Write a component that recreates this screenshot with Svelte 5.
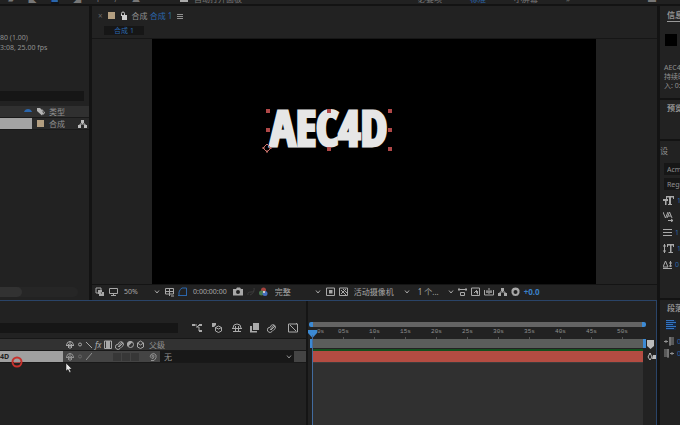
<script lang="ts">
  type Icon = { w: number; line?: string; fill?: string };

  const icons: Record<string, Icon> = {
    menu: { w: 6, line: 'M0 3.5H6M0 5.5H6M0 7.5H6' },
    lock: { w: 7, line: 'M1.5 5V2.5Q1.5 1 3 1T4.500 2.500V4', fill: 'M2 4H7V9H2Z' },
    up: { w: 8, fill: 'M0 6Q1 3 4 3T8 6Z' },
    tag: { w: 9, fill: 'M1 1H4L8 5L6 8.500L1 4ZM6 2L9 5.500L7.500 8Z' },
    tree: { w: 9, line: 'M4.500 3V5M2 7V5H7V7', fill: 'M3 1H6V4H3ZM0 6H3V9H0ZM6 6H9V9H6Z' },
    chevron: { w: 6, line: 'M1 3.500L3 6L5 3.500' },
    layers: { w: 10, line: 'M1 1H6V6H1Z', fill: 'M3 3H7V7H3ZM5 5H9V9H4V7H7Z' },
    monitor: { w: 9, line: 'M.5 1.500H8.500V6.500H.5ZM2 8.500H7M4.500 6.500V8' },
    grid: { w: 9, line: 'M.5 1.500H8.500V7H.5ZM4.500 1V9M0 4.500H9M6 9H9' },
    mask: { w: 9, line: 'M1 8.500H8.500V1H4Q2 2 1 5ZM0 8.500H9' },
    camera: { w: 10, fill: 'M0 2H3L4 .5H7L8 2H10V8.500H0ZM5 3A2 2 0 1 0 5 7A2 2 0 1 0 5 3Z' },
    ghost: { w: 8, line: 'M1 8Q0 5 4 5T7 1M3 8Q6 7 7 4' },
    region: { w: 9, line: 'M.5 1H8.500V8.500H.5Z', fill: 'M3 3H6.500V6.500H3Z' },
    checker: { w: 9, line: 'M.5 1H8.500V8.500H.5ZM2 3L7 8M2 7L7 2M4 2L8 6' },
    ruler: { w: 9, line: 'M0 2.500H9M1 1V4M8 1V4M2.500 5.500H6.500V8.500H2.500Z' },
    snap: { w: 9, line: 'M.5 1H8.500V8.500H.5ZM3 6L6 3', fill: 'M4 4H7V8Z' },
    chart: { w: 10, line: 'M.5 3V8H9.500V3M2 5H8M5 1V7M3 3V6M7 3V6' },
    shutter: { w: 9, fill: 'M4.500 .5L7 1L8.500 3V6L7 8.500L4.500 9L2 8.500L.5 6V3L2 1ZM4.500 3A2 2 0 1 0 4.500 7A2 2 0 1 0 4.500 3Z' },
    flow: { w: 10, line: 'M0 2H5M4 4H7V8H9M5 4L7 2H9', fill: 'M0 1H3V3H0ZM7 1H10V3H7ZM7 7H10V9H7Z' },
    draft: { w: 10, line: 'M3.500 4.500L6.500 3L9.500 4.500V8L6.500 9.500L3.500 8ZM3.500 4.500L6.500 6L9.500 4.500M1 1L3 3', fill: 'M0 0H4V2L2 4H0Z' },
    shy: { w: 10, line: 'M1 5Q1 1 5 1T9 5M0 5.500H10M3.500 3V9M6.500 3V9M1 8.500H9' },
    frames: { w: 9, fill: 'M3 0H9V7H3ZM0 3H2V8H7V9.500H0Z' },
    blur: { w: 9, line: 'M3.500 4A2.500 2.500 0 1 1 7 6.500L5 8.500A2.500 2.500 0 1 1 1 5ZM3 7L7 2M4 7L8 3' },
    graph: { w: 10, line: 'M.5 1H9.500V9H.5ZM2 2L8 8M8 1L9 0' },
    person: { w: 8, line: 'M0.500 5Q1 1.500 4 1.500T7.500 5M4 1V9M2.500 4V8M5.500 4V8M0 5.500H8' },
    sun: { w: 6, line: 'M3 3A1.500 1.500 0 1 0 3 6A1.500 1.500 0 1 0 3 3' },
    slash: { w: 6, line: 'M0 2L6 8' },
    edge: { w: 6, line: 'M0 8L6 1' },
    film: { w: 8, line: 'M.5 1H7.500V8.500H.5Z', fill: 'M2 1H6V8H2Z' },
    half: { w: 7, line: 'M3.500 1.500A3 3 0 1 0 3.500 7.500A3 3 0 1 0 3.500 1.500', fill: 'M1 6.500A3 3 0 0 1 5.500 2Z' },
    cube: { w: 7, line: 'M3.500 1L6.500 3V7L3.500 8.500L.5 7V3ZM.5 3L3.500 5L6.500 3' },
    swirl: { w: 8, line: 'M4 5A1 1 0 1 1 5 4Q5 7 3 6.500Q0 5 2 2.500Q5 0 7 3Q8 6 5 8.500H2' },
    marker: { w: 7, fill: 'M0 0H7V6L3.500 9L0 6Z' },
    comp: { w: 9, line: 'M3 1L1 5L3 8L5 5ZM3 1V2', fill: 'M6 3H9V7H5Z' },
    size: { w: 11, fill: 'M0 3H5V5H3.500V9H2V5H0ZM3 0H11V3H10V1.500H8V8H9V9H5V8H6V1.500H4V3H3Z' },
    kern: { w: 11, line: 'M0 0L2.500 6L5 0M4 6L6.500 0L9 6M5 4H8M5 8.500H10M8 7L10 8.500L8 10' },
    lines: { w: 9, line: 'M0 1.500H9M0 4.500H9M0 7.500H9' },
    height: { w: 11, line: 'M1.500 0V9M0 2H3M0 7H3', fill: 'M4 0H11V3H10V1.500H8.500V8H10V9H5.500V8H7V1.500H5V3H4Z' },
    base: { w: 9, line: 'M0 7L2.500 1L5 7ZM0 8.500H9M7.500 1V7M6 3H9M6 6H9' },
    align: { w: 10, line: 'M0 0.500H8M0 2.500H10M0 4.500H7M0 6.500H10M0 8.500H8' },
    indent: { w: 10, line: 'M0 4.500H4M2 3V6M5 1H10M5 3H10M5 5H10M5 7H10M6 0V9' },
    outdent: { w: 10, line: 'M6 4.500H10M8 3V6M0 1H5M0 3H5M0 5H5M0 7H5M4 0V9' }
  };

  const switches = ['person', 'sun', 'slash', 'fx', 'film', 'blur', 'half', 'cube'];
  const ticks = ['', '05s', '10s', '15s', '20s', '25s', '30s', '35s', '40s', '45s', '50s'];
  const typeRows = [
    { icon: 'size', value: '1' },
    { icon: 'kern', value: '' },
    { icon: 'lines', value: '1' },
    { icon: 'height', value: '1' },
    { icon: 'base', value: '0' }
  ];
  const handles = ['tl', 'tc', 'tr', 'ml', 'mr', 'bc', 'br'];

  let projectSearch = $state('');
  let layerSearch = $state('');
  let fontFamily = $state('Acme');
  let fontStyle = $state('Regular');
</script>

{#snippet icon(name: string)}
  <svg width={icons[name].w} height="10" viewBox="0 0 {icons[name].w} 10" aria-hidden="true">
    {#if icons[name].line}<path d={icons[name].line} fill="none" stroke="currentColor" />{/if}
    {#if icons[name].fill}<path d={icons[name].fill} fill="currentColor" fill-rule="evenodd" />{/if}
  </svg>
{/snippet}

{#snippet tool(name: string, label: string)}
  <button aria-label={label}>{@render icon(name)}</button>
{/snippet}

<div class="app">
  <header class="toolbar">
    <div class="tools"><span>▰</span><span>◣</span><span class="blue on">■</span><span>◢</span><span>T</span><span>/</span><span>▲</span></div>
    <label class="snap"><input type="checkbox" />自动打开面板</label>
    <nav>
      <a href="#default">必要项</a>
      <a class="blue" href="#standard">标准</a>
      <a href="#small">小屏幕</a>
      <a href="#library">»</a>
    </nav>
    <span class="find">▬</span>
  </header>

  <div class="body">
    <div class="workspace">
      <div class="upper">
        <section class="project">
          <div class="meta">
            <div>80 (1.00)</div>
            <div>3:08, 25.00 fps</div>
          </div>
          <input class="search" aria-label="搜索项目" bind:value={projectSearch} />
          <div class="cols head">
            <span class="first blue">{@render icon('up')}</span>
            <span class="mid">{@render icon('tag')}</span>
            <span>类型</span>
          </div>
          <div class="cols item">
            <span class="first selected"></span>
            <span class="mid"><i class="swatch"></i></span>
            <span>合成</span>
            <span class="end">{@render icon('tree')}</span>
          </div>
          <div class="scroll"><i></i></div>
        </section>

        <section class="viewer">
          <div class="title">
            <button class="close" aria-label="关闭">×</button>
            <i class="swatch"></i>
            {@render icon('lock')}
            <span class="name">合成 <span class="blue">合成 1</span></span>
            {@render tool('menu', '面板菜单')}
          </div>
          <div class="tabs"><button class="tab blue">合成 1</button></div>
          <div class="canvas">
            <div class="stage">
              <div class="text-layer">
                AEC4D
                {#each handles as h}<i class="handle {h}"></i>{/each}
                <svg class="anchor" width="10" height="10" viewBox="0 0 10 10"><path d="M5 1L9 5L5 9L1 5ZM0 5H3M7 5H10M5 7V10" fill="none" stroke="#c7716b" /></svg>
              </div>
            </div>
          </div>
          <footer class="controls">
            {@render tool('layers', '始终预览')}
            {@render tool('monitor', '主查看器')}
            <label class="drop zoom"><select aria-label="放大率"><option>50%</option></select>{@render icon('chevron')}</label>
            {@render tool('grid', '网格')}
            <span class="blue">{@render tool('mask', '蒙版')}</span>
            <button class="time">0:00:00:00</button>
            {@render tool('camera', '快照')}
            <span class="dim">{@render tool('ghost', '显示快照')}</span>
            <button aria-label="通道">
              <svg width="9" height="10" viewBox="0 0 9 10"><circle cx="4.500" cy="3" r="2.500" fill="#a6433e" /><circle cx="2.500" cy="6" r="2.500" fill="#487b50" /><circle cx="6" cy="6.500" r="2.500" fill="#456fc0" /><path d="M4 4H6V6H4Z" fill="#ccc" /></svg>
            </button>
            <label class="drop quality"><select aria-label="分辨率"><option>完整</option></select>{@render icon('chevron')}</label>
            {@render tool('region', '目标区域')}
            {@render tool('checker', '透明网格')}
            <label class="drop view"><select aria-label="视图"><option>活动摄像机</option></select>{@render icon('chevron')}</label>
            <label class="drop count"><select aria-label="视图布局"><option>1 个...</option></select>{@render icon('chevron')}</label>
            {@render tool('ruler', '像素长宽比')}
            {@render tool('snap', '快速预览')}
            {@render tool('chart', '时间轴')}
            {@render tool('tree', '流程图')}
            {@render tool('shutter', '重置曝光')}
            <span class="exposure">+0.0</span>
          </footer>
        </section>
      </div>

      <section class="timeline">
        <div class="layers">
          <div class="layer-tools">
            <input class="search" aria-label="搜索图层" bind:value={layerSearch} />
            {@render tool('flow', '合成微型流程图')}
            {@render tool('draft', '草图 3D')}
            {@render tool('shy', '隐藏图层')}
            {@render tool('frames', '帧混合')}
            {@render tool('blur', '运动模糊')}
            {@render tool('graph', '图表编辑器')}
          </div>
          <div class="layer-head">
            <div class="switches">
              {#each switches as s}
                {#if s === 'fx'}<em>fx</em>{:else}{@render icon(s)}{/if}
              {/each}
            </div>
            <span>父级</span>
          </div>
          <div class="layer">
            <div class="layer-name">4D</div>
            <div class="switches">
              {@render icon('person')}
              <span class="faint">{@render icon('sun')}</span>
              {@render icon('edge')}
              <span class="boxes"><i></i><i></i><i></i></span>
            </div>
            <span class="whip">{@render icon('swirl')}</span>
            <label class="drop parent"><select aria-label="父级"><option>无</option></select>{@render icon('chevron')}</label>
          </div>
        </div>
        <div class="tracks">
          <div class="nav-bar"></div>
          <div class="ruler">
            {#each ticks as t}<span>{t}</span>{/each}
          </div>
          <div class="work-area"></div>
          <div class="cache"></div>
          <div class="clip"></div>
          <div class="lane"></div>
          <svg class="playhead" width="9" height="8" viewBox="0 0 9 8"><path d="M0 0H9V3L4.500 8L0 3Z" fill="#3c8ad4" /></svg>
          <span class="start">0s</span>
          <i class="needle"></i>
        </div>
        <div class="bins">{@render icon('marker')}{@render icon('comp')}</div>
        <svg class="click" width="12" height="12" viewBox="0 0 12 12"><circle cx="6" cy="6" r="4.500" fill="none" stroke="#c8322d" stroke-width="2" /><path d="M3 6.500H9" stroke="#a64a47" /></svg>
        <svg class="cursor" width="8" height="12" viewBox="0 0 8 12"><path d="M1 1V9L3 7.500L4.500 10.500L6 10L4.500 7H7Z" fill="#e8e8e8" stroke="#111" stroke-width=".5" /></svg>
      </section>
    </div>

    <aside class="side">
      <section class="info">
        <h2>信息</h2>
        <i class="black"></i>
        <p>AEC4D</p>
        <p>持续时间</p>
        <p>入: 0:00</p>
      </section>
      <section class="preview"><h2>预览</h2></section>
      <section class="character">
        <p class="cut">设</p>
        <input aria-label="字体" bind:value={fontFamily} />
        <input aria-label="样式" bind:value={fontStyle} />
        <div class="type-rows">
          {#each typeRows as row}
            <div>{@render icon(row.icon)}<span class="blue">{row.value}</span></div>
          {/each}
        </div>
      </section>
      <section class="paragraph">
        <h2>段落</h2>
        <button class="align" aria-label="左对齐">{@render icon('align')}</button>
        <div>{@render icon('indent')}<span class="blue">0</span></div>
        <div>{@render icon('outdent')}<span class="blue">0</span></div>
      </section>
    </aside>
  </div>
</div>

<style>
:global(body) {
  margin: 0;
  background: #131313;
}

.app {
  display: flex;
  flex-direction: column;
  height: 100vh;
  overflow: hidden;
  background: #131313;
  color: #919191;
  font-family: "Noto Sans", "Noto Sans CJK SC", sans-serif;
  font-size: 7px;
  line-height: 10px;
}

.app * {
  box-sizing: border-box;
}

svg {
  display: block;
  flex: none;
}

button {
  display: block;
  flex: none;
  padding: 0;
  border: 0;
  background: none;
  color: inherit;
  font: inherit;
}

input {
  display: block;
  min-width: 0;
  padding: 0;
  border: 0;
  border-radius: 0;
  background: #161616;
  color: inherit;
  font: inherit;
}

select {
  flex: 1;
  min-width: 0;
  padding: 0;
  border: 0;
  appearance: none;
  background: none;
  color: inherit;
  font: inherit;
}

.blue {
  color: #2b66ac;
}

.dim {
  color: #3c3c3c;
}

.faint {
  color: #666;
}

.swatch {
  width: 7px;
  height: 7px;
  background: #b39e80;
}

.toolbar {
  position: relative;
  display: flex;
  align-items: flex-end;
  height: 4px;
  overflow: hidden;
  background: #212121;
  color: #777;
  font-size: 8px;
}

.tools {
  display: flex;
  justify-content: space-between;
  width: 140px;
  padding-left: 8px;
}

.tools .on {
  background: #10151d;
}

.snap {
  display: flex;
  align-items: flex-end;
  gap: 6px;
  margin-left: 40px;
}

.snap input {
  width: 8px;
  height: 8px;
  margin: 0 0 2px;
  appearance: none;
  background: #aaa;
}

.toolbar nav {
  display: flex;
  gap: 28px;
  margin-left: auto;
}

.toolbar a {
  color: #777;
  text-decoration: none;
}

.toolbar a.blue {
  color: #2b66ac;
}

.find {
  margin: 0 24px 0 78px;
}

.body {
  display: flex;
  flex: 1;
  gap: 3px;
  min-height: 0;
  padding-top: 2px;
}

.workspace {
  display: flex;
  flex: 1;
  flex-direction: column;
  min-width: 0;
}

.upper {
  display: flex;
  flex: 1;
  gap: 3px;
  min-height: 0;
}

.project {
  display: flex;
  flex: none;
  flex-direction: column;
  width: 89px;
  background: #222;
}

.meta {
  padding: 27px 0 38px;
  font-size: 7px;
}

.project .search {
  width: 84px;
  height: 10px;
}

.cols {
  display: flex;
  align-items: center;
  height: 12px;
  background: #303030;
  font-size: 8px;
}

.cols.head {
  margin-top: 5px;
  border-bottom: 1px solid #191919;
}

.cols.item {
  border-bottom: 1px solid #191919;
  background: #292929;
}

.first {
  display: flex;
  justify-content: flex-end;
  width: 32px;
  height: 100%;
}

.selected {
  background: #a3a3a3;
}

.mid {
  display: flex;
  justify-content: center;
  width: 17px;
}

.cols .end {
  margin: 0 2px 0 auto;
  color: #bbb;
}

.head .mid {
  color: #b5b5b5;
}

.scroll {
  width: 78px;
  height: 10px;
  margin: auto 0 3px;
  border-radius: 5px;
  background: #262626;
}

.scroll i {
  display: block;
  width: 22px;
  height: 100%;
  border-radius: 0 5px 5px 0;
  background: #323232;
}

.viewer {
  display: flex;
  flex: 1;
  flex-direction: column;
  min-width: 0;
  background: #222;
}

.title {
  display: flex;
  align-items: center;
  height: 19px;
  padding-left: 6px;
  font-size: 8px;
}

.title .close {
  margin-right: 5px;
  color: #666;
}

.title > svg {
  margin-left: 5px;
  color: #ccc;
}

.name {
  margin: 0 5px;
}

.tabs {
  height: 14px;
  padding: 1px 0 0 12px;
  border-bottom: 1px solid #161616;
}

.tab {
  width: 40px;
  height: 9px;
  background: #161616;
  font-size: 7px;
  line-height: 9px;
}

.canvas {
  display: flex;
  flex: 1;
  min-height: 0;
  padding: 0 61px 0 60px;
}

.stage {
  position: relative;
  flex: 1;
  background: #000;
}

.text-layer {
  position: absolute;
  top: 72px;
  left: 116px;
  width: 122px;
  height: 38px;
  padding-left: 2px;
  color: #e6e6e6;
  font-family: "Open Sans Condensed", "DejaVu Serif Condensed", serif;
  font-size: 48px;
  font-weight: bold;
  line-height: 34px;
  white-space: nowrap;
  -webkit-text-stroke: 3px #e6e6e6;
}

.handle {
  position: absolute;
  width: 4px;
  height: 4px;
  background: #b04848;
}

.tl, .tc, .tr { top: -2px; }
.ml, .mr { top: 17px; }
.bc, .br { bottom: -2px; }
.tl, .ml { left: -2px; }
.tc, .bc { left: 59px; }
.tr, .mr, .br { right: -2px; }

.anchor {
  position: absolute;
  bottom: -4px;
  left: -6px;
}

.controls {
  display: flex;
  flex: none;
  align-items: center;
  gap: 4px;
  height: 16px;
  padding: 0 0 2px 3px;
  border-top: 1px solid #141414;
  color: #a8a8a8;
  font-size: 8px;
}

.drop {
  display: flex;
  flex: none;
  align-items: center;
}

.zoom {
  width: 36px;
  margin: 0 1px 0 2px;
  font-size: 7px;
}

.time {
  margin: 0 2px;
  font-size: 7px;
}

.quality {
  width: 46px;
  margin: 0 1px 0 3px;
}

.view {
  width: 56px;
  margin: 0 4px 0 2px;
}

.count {
  width: 36px;
}

.exposure {
  color: #3a80c8;
  font-weight: bold;
}

.timeline {
  position: relative;
  display: flex;
  flex: none;
  min-height: 125px;
  border: 1px solid #2a4468;
  border-width: 1px 1px 0 0;
  background: #222;
}

.layers {
  display: flex;
  flex: 0 0 308px;
  flex-direction: column;
  border-right: 2px solid #151515;
}

.layer-tools {
  display: flex;
  align-items: center;
  height: 38px;
  padding: 16px 8px 0 0;
  gap: 8px;
  border-bottom: 1px solid #171717;
  color: #aaa;
}

.layer-tools .search {
  flex: 1;
  height: 10px;
  margin-right: 6px;
}

.layer-tools button:nth-of-type(2) {
  margin: 0 2px;
}

.layer-tools button:last-child {
  margin-left: 4px;
}

.layer-head {
  display: flex;
  align-items: center;
  height: 12px;
  padding-left: 63px;
  border-bottom: 1px solid #191919;
  background: #323232;
  font-size: 8px;
}

.layer-head .switches {
  color: #a8a8a8;
}

.switches {
  display: flex;
  align-items: center;
  gap: 3px;
  width: 86px;
  padding-left: 3px;
}

.layer {
  display: flex;
  align-items: center;
  height: 12px;
  padding-right: 12px;
  border-bottom: 1px solid #191919;
  background: #444;
}

.layer-name {
  width: 63px;
  height: 100%;
  background: #a0a0a0;
  color: #222;
  font-weight: bold;
  line-height: 12px;
}

.boxes {
  display: flex;
  gap: 1px;
  margin-left: 18px;
}

.boxes i {
  width: 8px;
  height: 8px;
  background: #373737;
}

.whip {
  width: 11px;
}

.parent {
  flex: 1;
  height: 100%;
  padding: 0 2px 0 4px;
  background: #181818;
  font-size: 8px;
}

.tracks {
  position: relative;
  display: flex;
  flex: 1;
  flex-direction: column;
  min-width: 0;
  padding: 21px 0 0 4px;
}

.nav-bar {
  height: 5px;
  margin-left: -3px;
  border: solid #3c8ad4;
  border-width: 0 4px;
  border-radius: 2px;
  background: #646464;
}

.ruler {
  display: flex;
  height: 12px;
  margin: 0 -12px 0 -15px;
  font-family: "Liberation Mono", monospace;
  font-size: 6px;
}

.ruler span {
  flex: 0 0 31px;
  height: 12px;
  background: linear-gradient(#555, #555) center bottom / 1px 2px no-repeat;
  text-align: center;
}

.work-area {
  height: 9px;
  margin-left: -2px;
  border: solid #3c8ad4;
  border-width: 0 3px;
  background: #5b5d5b;
}

.cache {
  height: 2px;
  margin: 1px 3px 0 0;
  background: #14501e;
}

.clip {
  height: 11px;
  margin-right: 3px;
  background: #b44c42;
}

.lane {
  flex: 1;
  margin-right: 3px;
  border-top: 1px solid #3d3d3d;
  background: #303030;
}

.playhead {
  position: absolute;
  top: 29px;
  left: 0;
}

.start {
  position: absolute;
  top: 26px;
  left: 9px;
  font-family: "Liberation Mono", monospace;
  font-size: 6px;
}

.needle {
  position: absolute;
  top: 34px;
  bottom: 0;
  left: 4px;
  width: 1px;
  background: #426b9e;
}

.bins {
  display: flex;
  flex: none;
  flex-direction: column;
  gap: 2px;
  width: 10px;
  padding: 39px 0 0 1px;
  color: #bbb;
}

.click {
  position: absolute;
  top: 55px;
  left: 11px;
}

.cursor {
  position: absolute;
  top: 61px;
  left: 65px;
}

.side {
  display: flex;
  flex: none;
  flex-direction: column;
  gap: 2px;
  width: 20px;
  overflow: hidden;
  white-space: nowrap;
}

.side section {
  flex: none;
  overflow: hidden;
  background: #222;
}

.side h2 {
  margin: 0 0 0 7px;
  font-size: 8px;
  line-height: 12px;
}

.side p {
  margin: 0 0 0 4px;
  line-height: 9px;
}

.side .info {
  height: 92px;
  padding-top: 3px;
}

.info h2 {
  border-bottom: 1px solid #999;
}

.black {
  display: block;
  width: 12px;
  height: 12px;
  margin: 12px 0 17px 5px;
  background: #000;
}

.side .preview {
  height: 39px;
  padding-top: 2px;
}

.side .character {
  height: 157px;
  padding-top: 5px;
}

.side .cut {
  margin: 0;
  font-size: 8px;
}

.character input {
  width: 40px;
  height: 12px;
  margin: 8px 0 0 4px;
  padding-left: 3px;
  background: #161616;
}

.character input + input {
  margin-top: 3px;
}

.type-rows {
  display: flex;
  flex-direction: column;
  gap: 6px;
  padding: 6px 0 0 3px;
  color: #aaa;
}

.type-rows div,
.paragraph div {
  display: flex;
  align-items: center;
  gap: 3px;
}

.side .paragraph {
  flex: 1;
  padding-top: 2px;
}

.align {
  margin: 6px 0 7px 6px;
  background: #142a48;
  color: #3474c0;
}

.paragraph div {
  margin: 0 0 2px 4px;
}
</style>
